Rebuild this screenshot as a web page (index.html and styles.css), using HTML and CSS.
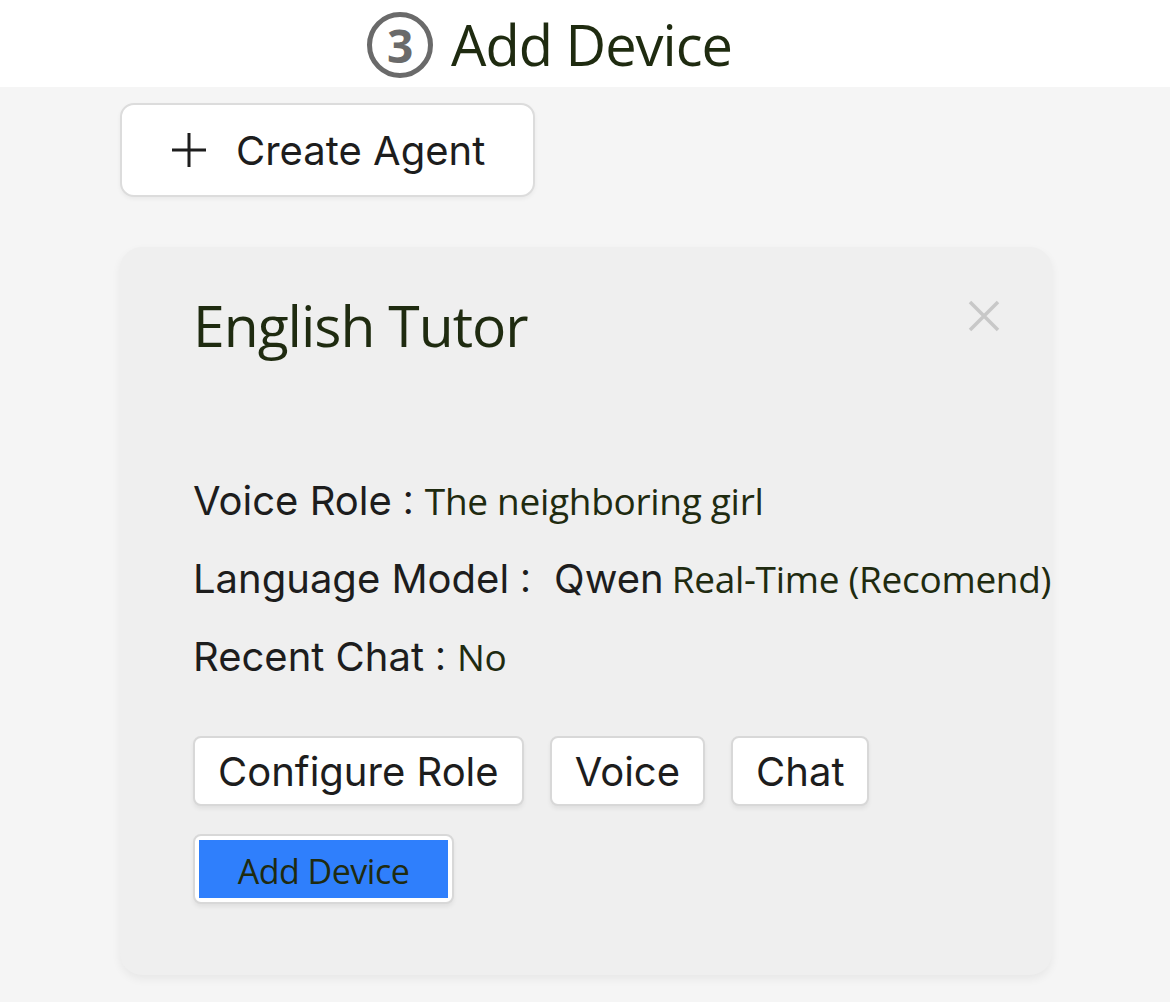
FILE: index.html
```html
<!DOCTYPE html>
<html>
<head>
<meta charset="utf-8">
<link rel="stylesheet" href="styles.css">
</head>
<body>
<header class="top">
  <span class="step">3</span>
  <h1 class="heading">Add Device</h1>
</header>
<main class="main">
  <button class="create">
    <svg class="plus" viewBox="0 0 34 34" width="34" height="34"><path d="M17 0V34M0 17H34" stroke="#1d1d1d" stroke-width="3" fill="none"/></svg>
    <span>Create Agent</span>
  </button>
  <section class="card">
    <div class="card-head">
      <h2 class="card-title">English Tutor</h2>
      <svg class="close" viewBox="0 0 32 32" width="32" height="32"><path d="M2 2L30 30M30 2L2 30" stroke="#c8c8c8" stroke-width="3.5" fill="none"/></svg>
    </div>
    <div class="info">
      <div class="row"><span class="label">Voice Role<span class="colon">：</span></span><span class="value">The neighboring girl</span></div>
      <div class="row"><span class="label">Language Model<span class="colon">：</span></span><span class="label qwen">Qwen</span><span class="value">Real-Time (Recomend)</span></div>
      <div class="row"><span class="label">Recent Chat<span class="colon">：</span></span><span class="value">No</span></div>
    </div>
    <div class="actions">
      <button class="btn">Configure Role</button>
      <button class="btn">Voice</button>
      <button class="btn">Chat</button>
    </div>
    <div class="actions">
      <button class="btn-add"><span class="btn-add-inner">Add Device</span></button>
    </div>
  </section>
</main>
</body>
</html>
```
FILE: styles.css
```css
* { box-sizing: border-box; }
html, body { margin: 0; padding: 0; }
body {
  width: 1170px;
  height: 1002px;
  background: #f5f5f5;
  overflow: hidden;
  font-family: "Open Sans", sans-serif;
}
.top {
  height: 87px;
  background: #ffffff;
  display: flex;
  align-items: center;
  justify-content: center;
  gap: 18px;
  padding-right: 71px;
}
.step {
  width: 66px;
  height: 66px;
  border: 5px solid #6a6a6a;
  border-radius: 50%;
  display: flex;
  align-items: center;
  justify-content: center;
  font-family: "Open Sans", sans-serif;
  font-weight: 700;
  font-size: 46px;
  color: #6a6a6a;
  line-height: 1;
  margin-top: 2px;
}
.heading {
  margin: 0;
  font-family: "Open Sans", sans-serif;
  font-weight: 500;
  font-size: 56px;
  color: #1f2b10;
  letter-spacing: -1px;
  line-height: 1;
}
.main {
  padding: 16px 0 0 120px;
}
.create {
  width: 415px;
  height: 94px;
  background: #fff;
  border: 2px solid #dcdcdc;
  border-radius: 14px;
  display: flex;
  align-items: center;
  gap: 30px;
  padding: 0 0 0 50px;
  font-family: "Inter", sans-serif;
  font-size: 40px;
  color: #1d1d1d;
  box-shadow: 0 2px 4px rgba(0,0,0,0.05);
}
.card {
  margin-top: 50px;
  width: 932px;
  height: 728px;
  background: #efefef;
  border-radius: 22px;
  box-shadow: 0 4px 10px rgba(0,0,0,0.06);
  padding: 46px 52px 0 73px;
}
.card-head {
  display: flex;
  justify-content: space-between;
  align-items: flex-start;
}
.card-title {
  margin: 0;
  font-family: "Open Sans", sans-serif;
  font-weight: 500;
  font-size: 57px;
  color: #1f2b10;
  letter-spacing: -1px;
  line-height: 64px;
}
.close { margin-top: 7px; }
.info {
  margin-top: 118px;
  display: flex;
  flex-direction: column;
  gap: 20px;
}
.row {
  display: flex;
  align-items: baseline;
  height: 58px;
  white-space: nowrap;
}
.label {
  font-family: "Inter", "Noto Sans CJK SC", sans-serif;
  font-size: 40px;
  color: #1d1d1d;
}
.colon {
  font-family: "Noto Sans CJK TC", sans-serif;
  font-size: 33px;
}
.qwen { margin-left: 12px; margin-right: 8px; }
.value {
  font-family: "Open Sans", sans-serif;
  font-size: 37px;
  color: #1f2b10;
  letter-spacing: -0.3px;
}
.actions {
  display: flex;
  gap: 26px;
  margin-top: 47px;
}
.actions + .actions { margin-top: 28px; }
.btn {
  height: 70px;
  background: #fff;
  border: 2px solid #d8d8d8;
  border-radius: 8px;
  padding: 0 23px;
  font-family: "Inter", sans-serif;
  font-size: 40px;
  color: #1d1d1d;
  box-shadow: 0 3px 4px rgba(0,0,0,0.06);
}
.btn-add {
  width: 261px;
  height: 70px;
  background: #fff;
  border: 2px solid #d8d8d8;
  border-radius: 8px;
  padding: 4px;
  box-shadow: 0 3px 4px rgba(0,0,0,0.06);
}
.btn-add-inner {
  display: flex;
  width: 100%;
  height: 100%;
  align-items: center;
  justify-content: center;
  background: #2f7ffc;
  font-family: "Open Sans", sans-serif;
  font-size: 34px;
  color: #1f2b10;
  letter-spacing: -0.5px;
  padding-top: 3px;
}
```
